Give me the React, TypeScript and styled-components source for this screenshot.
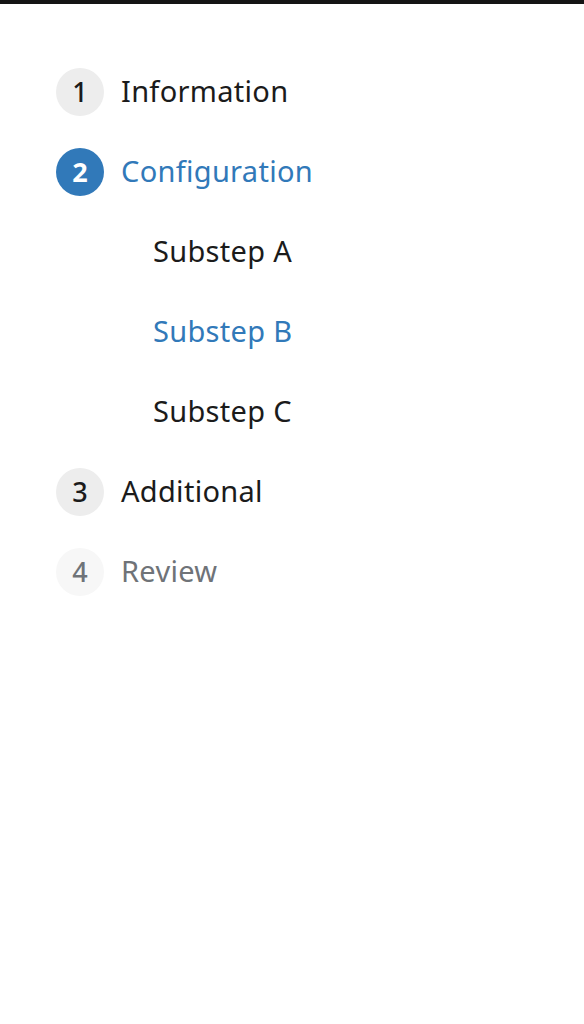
import React from "react";
import styled, { createGlobalStyle } from "styled-components";

const GlobalStyle = createGlobalStyle`
  body {
    margin: 0;
    background: #ffffff;
    font-family: "Noto Sans", "Open Sans", sans-serif;
  }
`;

const TopBar = styled.div`
  height: 4px;
  background: #151515;
`;

const NavList = styled.ol`
  list-style: none;
  margin: 0;
  padding: 48px 0 0 56px;
`;

const StepRow = styled.li`
  display: flex;
  align-items: center;
  gap: 17px;
  height: 80px;
`;

const Badge = styled.span<{ $state: "done" | "current" | "todo" }>`
  flex: none;
  display: flex;
  align-items: center;
  justify-content: center;
  box-sizing: border-box;
  width: 48px;
  height: 48px;
  padding-bottom: 2px;
  border-radius: 50%;
  font-size: 27px;
  line-height: 1;
  background: ${(p) =>
    p.$state === "current" ? "#3179b9" : p.$state === "todo" ? "#f7f7f7" : "#ededed"};
  color: ${(p) =>
    p.$state === "current" ? "#ffffff" : p.$state === "todo" ? "#6f7378" : "#1b1b1b"};
  font-weight: ${(p) => (p.$state === "current" ? 700 : 500)};
`;

const Label = styled.span<{ $tone: "dark" | "blue" | "muted" }>`
  font-size: 29px;
  line-height: 1;
  padding-bottom: 3px;
  letter-spacing: 0.3px;
  color: ${(p) =>
    p.$tone === "blue" ? "#3179b9" : p.$tone === "muted" ? "#6f7378" : "#1b1b1b"};
`;

const SubRow = styled.li`
  display: flex;
  align-items: center;
  height: 80px;
  padding-left: 97px;
`;

type Step = {
  n: number;
  name: string;
  state: "done" | "current" | "todo";
  subs?: { name: string; active?: boolean }[];
};

const steps: Step[] = [
  { n: 1, name: "Information", state: "done" },
  {
    n: 2,
    name: "Configuration",
    state: "current",
    subs: [{ name: "Substep A" }, { name: "Substep B", active: true }, { name: "Substep C" }],
  },
  { n: 3, name: "Additional", state: "done" },
  { n: 4, name: "Review", state: "todo" },
];

const App: React.FC = () => {
  return (
    <>
      <GlobalStyle />
      <TopBar />
      <NavList>
        {steps.map((s) => (
          <React.Fragment key={s.n}>
            <StepRow>
              <Badge $state={s.state}>{s.n}</Badge>
              <Label $tone={s.state === "current" ? "blue" : s.state === "todo" ? "muted" : "dark"}>
                {s.name}
              </Label>
            </StepRow>
            {s.subs?.map((sub) => (
              <SubRow key={sub.name}>
                <Label $tone={sub.active ? "blue" : "dark"}>{sub.name}</Label>
              </SubRow>
            ))}
          </React.Fragment>
        ))}
      </NavList>
    </>
  );
};

export default App;
